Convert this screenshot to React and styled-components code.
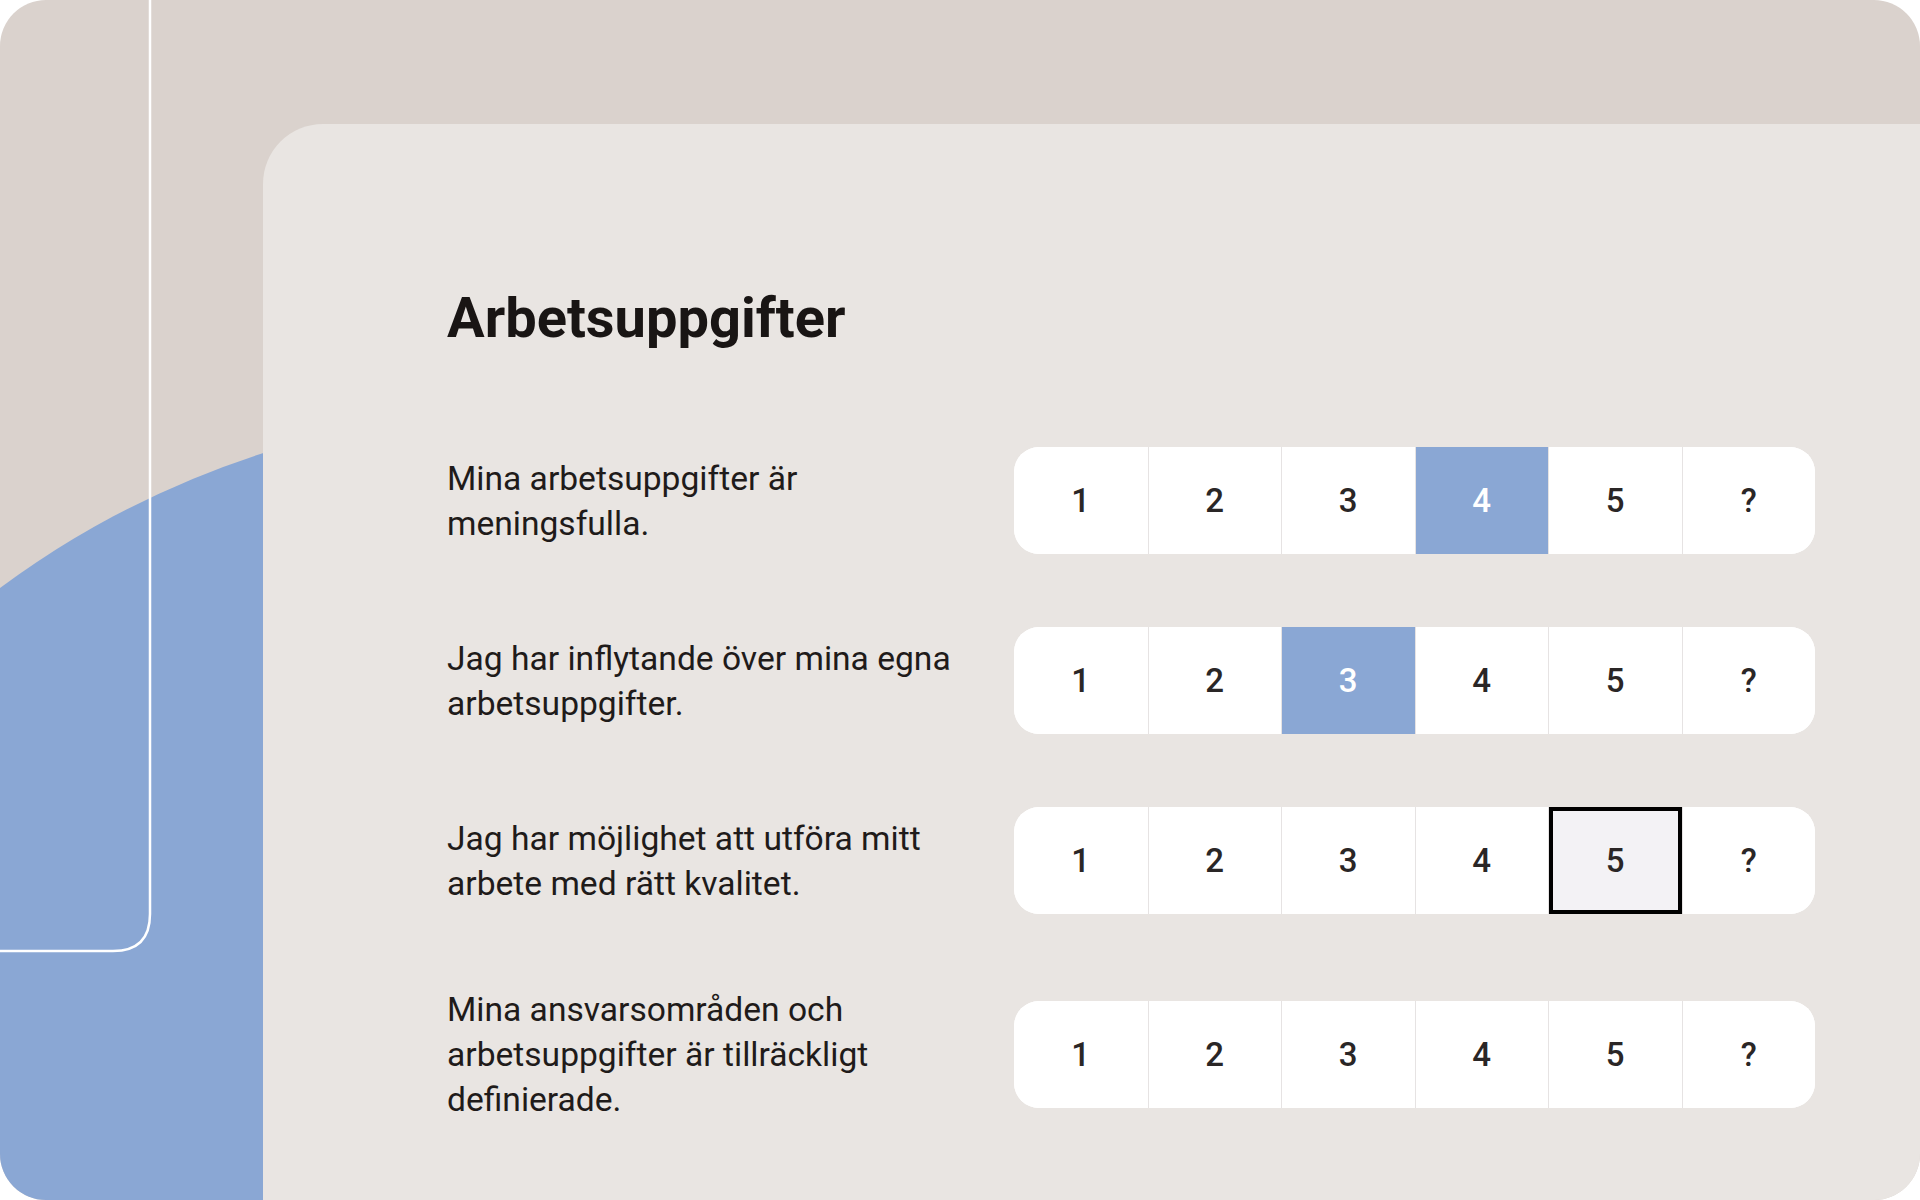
import React from 'react'
import styled, { createGlobalStyle } from 'styled-components'

const GlobalStyle = createGlobalStyle`
  html, body {
    margin: 0;
    padding: 0;
    background: #ffffff;
  }
  body {
    font-family: 'Roboto', 'Liberation Sans', sans-serif;
  }
`

const questions = [
  { text: 'Mina arbetsuppgifter är meningsfulla.', selected: 4 },
  { text: 'Jag har inflytande över mina egna arbetsuppgifter.', selected: 3 },
  { text: 'Jag har möjlighet att utföra mitt arbete med rätt kvalitet.', focused: 5 },
  { text: 'Mina ansvarsområden och arbetsuppgifter är tillräckligt definierade.' },
]

const options = ['1', '2', '3', '4', '5', '?']

// background blob + thin white frame line behind the panel
const Decoration = () => (
  <DecorLayer viewBox="0 0 1920 1200" preserveAspectRatio="none">
    <circle cx="539" cy="1315" r="905" fill="#8aa7d4" />
    <path
      d="M150 -10 L150 914 Q150 951 113 951 L-10 951"
      fill="none"
      stroke="#ffffff"
      strokeWidth="2.5"
    />
  </DecorLayer>
)

const RatingBar = ({ selected, focused }) => (
  <Bar>
    {options.map((opt, i) => (
      <Cell
        key={opt}
        $first={i === 0}
        $active={selected === i + 1}
        $focused={focused === i + 1}
      >
        {opt}
      </Cell>
    ))}
  </Bar>
)

export default function App() {
  return (
    <>
      <GlobalStyle />
      <Frame>
        <Decoration />
        <Panel>
          <Title>Arbetsuppgifter</Title>
          <Questions>
            {questions.map((q) => (
              <Row key={q.text}>
                <Label>{q.text}</Label>
                <RatingBar selected={q.selected} focused={q.focused} />
              </Row>
            ))}
          </Questions>
        </Panel>
      </Frame>
    </>
  )
}

const Frame = styled.div`
  position: relative;
  width: 1920px;
  height: 1200px;
  box-sizing: border-box;
  padding: 124px 0 0 263px;
  display: flex;
  border-radius: 46px;
  overflow: hidden;
  background: #dad2cd;
`

const DecorLayer = styled.svg`
  position: absolute;
  inset: 0;
  width: 100%;
  height: 100%;
`

const Panel = styled.main`
  position: relative;
  z-index: 1;
  flex: 1;
  box-sizing: border-box;
  padding: 166px 0 0 184px;
  background: #e9e5e2;
  border-top-left-radius: 60px;
`

const Title = styled.h1`
  margin: 0 0 101px;
  font-family: 'Roboto', 'Liberation Sans', sans-serif;
  font-size: 56px;
  line-height: 56px;
  font-weight: 700;
  color: #191514;
`

const Questions = styled.div`
  display: flex;
  flex-direction: column;
  gap: 73px;
`

const Row = styled.div`
  display: grid;
  grid-template-columns: 567px 801px;
  align-items: center;
`

const Label = styled.p`
  margin: 0;
  width: 530px;
  font-family: 'Roboto', 'Liberation Sans', sans-serif;
  font-size: 33.6px;
  line-height: 45px;
  font-weight: 400;
  color: #1f1b1a;
`

const Bar = styled.div`
  display: grid;
  grid-template-columns: repeat(6, 1fr);
  height: 107px;
  border-radius: 25px;
  overflow: hidden;
  background: #ffffff;
`

const Cell = styled.div`
  display: flex;
  align-items: center;
  justify-content: center;
  border-left: ${(p) => (p.$first ? 'none' : '1px solid #e6e3e3')};
  background: ${(p) => (p.$active ? '#8aa7d4' : p.$focused ? '#f3f2f5' : '#ffffff')};
  box-shadow: ${(p) => (p.$focused ? 'inset 0 0 0 4px #000000' : 'none')};
  font-family: 'Roboto', 'Liberation Sans', sans-serif;
  font-size: 33px;
  font-weight: 500;
  color: ${(p) => (p.$active ? '#ffffff' : '#2a2626')};
`
